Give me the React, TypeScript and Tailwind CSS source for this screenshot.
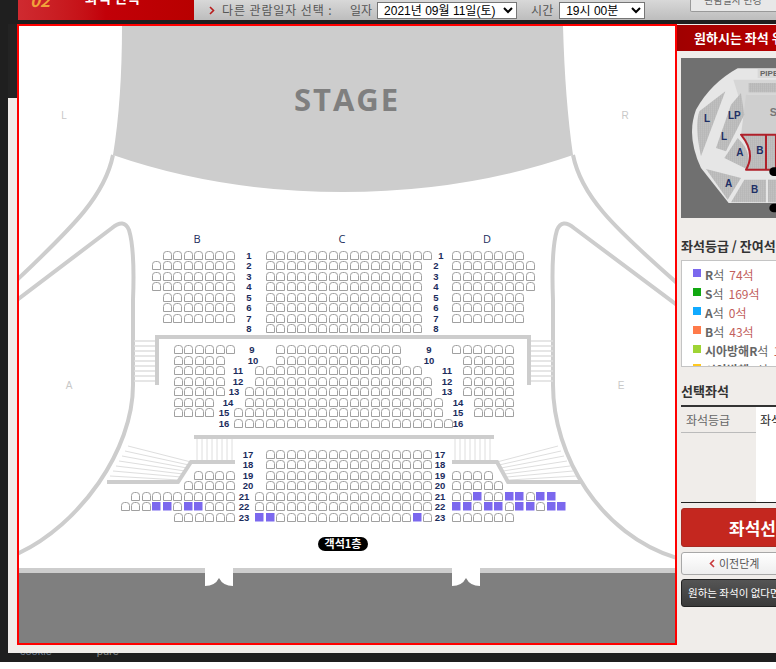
const kr = "font-['Noto_Sans_CJK_KR','Liberation_Sans',sans-serif]";

// [top, left, count, sold seats]
type Row = [number, number, number, number[]?];

const P = 10.5;
const rowY = (n: number, base: number, first: number) => base + (n - first) * P;
const upper = (n: number) => rowY(n, 250.5, 1);
const middle = (n: number) => rowY(n, 345, 9);
const lower = (n: number) => rowY(n, 449.5, 17);

const seats: Row[] = [
  // 1-8
  [upper(1), 162.5, 7], [upper(1), 265.5, 16], [upper(1), 452, 7],
  ...[2, 3, 4].flatMap((n): Row[] => [[upper(n), 152, 8], [upper(n), 265.5, 15], [upper(n), 452, 8]]),
  ...[5, 6, 7].flatMap((n): Row[] => [[upper(n), 162.5, 7], [upper(n), 265.5, 15], [upper(n), 452, 7]]),
  [upper(8), 265.5, 15],
  // 9-16
  [middle(9), 173.5, 6], [middle(9), 276, 12], [middle(9), 452, 6],
  [middle(10), 173.5, 5], [middle(10), 276, 12], [middle(10), 463, 5],
  [middle(11), 173.5, 5], [middle(11), 255, 16], [middle(11), 463, 5],
  [middle(12), 173.5, 5], [middle(12), 255, 17], [middle(12), 463, 5],
  [middle(13), 173.5, 5], [middle(13), 244.5, 18], [middle(13), 463, 5],
  [middle(14), 173.5, 4], [middle(14), 244.5, 19], [middle(14), 473.5, 4],
  [middle(15), 173.5, 4], [middle(15), 234, 20], [middle(15), 473.5, 4],
  [middle(16), 234, 21],
  // 17-23
  ...[17, 18].map((n): Row => [lower(n), 265.5, 16]),
  [lower(19), 194, 4], [lower(19), 265.5, 16], [lower(19), 452, 4],
  [lower(20), 183.5, 5], [lower(20), 265.5, 16], [lower(20), 452, 5],
  [lower(21), 131, 10], [lower(21), 255, 17], [lower(21), 452, 10, [2, 5, 6, 8, 9]],
  [lower(22), 120.5, 11, [3, 4, 6, 7]], [lower(22), 255, 17], [lower(22), 452, 11, [0, 1, 3, 4, 6, 7, 9, 10]],
  [lower(23), 173.5, 6], [lower(23), 255, 17, [0, 1, 15]], [lower(23), 452, 6],
];

// [label, x, y]
const labels: [string, number, number][] = [
  ...[1, 2, 3, 4, 5, 6, 7, 8].flatMap((n): [string, number, number][] => [
    [`${n}`, 249, upper(n) + 8],
    [`${n}`, n === 1 ? 441 : 436, upper(n) + 8],
  ]),
  ['9', 252, middle(9) + 8], ['9', 429, middle(9) + 8],
  ['10', 253, middle(10) + 8], ['10', 429, middle(10) + 8],
  ['11', 238, middle(11) + 8], ['11', 447, middle(11) + 8],
  ['12', 238, middle(12) + 8], ['12', 447, middle(12) + 8],
  ['13', 234, middle(13) + 8], ['13', 447, middle(13) + 8],
  ['14', 228, middle(14) + 8], ['14', 458, middle(14) + 8],
  ['15', 224, middle(15) + 8], ['15', 458, middle(15) + 8],
  ['16', 224, middle(16) + 8], ['16', 458, middle(16) + 8],
  ...[17, 18, 19, 20].flatMap((n): [string, number, number][] => [
    [`${n}`, 248, lower(n) + 8],
    [`${n}`, 440, lower(n) + 8],
  ]),
  ...[21, 22, 23].flatMap((n): [string, number, number][] => [
    [`${n}`, 244, lower(n) + 8],
    [`${n}`, 440, lower(n) + 8],
  ]),
];

function Seat({ x, y, sold }: { x: number; y: number; sold: boolean }) {
  const l = Math.round(x) + 0.5;
  const t = Math.round(y) + 0.5;
  if (sold) return <rect x={l - 0.5} y={t - 0.5} width="8.5" height="8.5" fill="#7b68ee" />;
  return (
    <path
      d={`M${l} ${t + 8}V${t + 3}Q${l} ${t} ${l + 3} ${t}H${l + 5}Q${l + 8} ${t} ${l + 8} ${t + 3}V${t + 8}Z`}
      fill="white"
      stroke="#a0a0a0"
    />
  );
}

function Door({ x }: { x: number }) {
  return <path d={`M${x} 567V586Q${x + 10} 586 ${x + 14} 578Q${x + 18} 586 ${x + 28} 586V567Z`} fill="white" />;
}

function SeatMap() {
  return (
    <svg width="656" height="617" viewBox="19 26 656 617" className="block bg-white">
      {/* stage */}
      <path d="M122 26Q122 100 113 155Q220 192 343 192Q466 192 573 155Q565 100 563 26Z" fill="#cdcdcd" />
      <text x="347" y="111" textAnchor="middle" className="fill-[#7f7f7f] font-['Open_Sans'] text-[31px] font-bold tracking-[2px]">STAGE</text>
      {['L', 'R', 'A', 'E'].map((t, i) => (
        <text key={t} x={[64, 625, 69, 621][i]} y={[119, 119, 389, 389][i]} textAnchor="middle" className="fill-[#c8c8c8] font-['Liberation_Sans'] text-[10px]">{t}</text>
      ))}

      {/* balcony outlines */}
      <g fill="none" stroke="#cdcdcd" strokeWidth="4">
        <path d="M113 155C105 195 75 225 17 280" />
        <path d="M573 155C581 195 611 225 677 283" />
        <path d="M17 300L112 228Q124 218 129 230Q135 250 133 300V385C133 450 80 525 17 554" />
        <path d="M677 305L574 228Q562 218 557 230Q551 250 553 300V385C553 455 600 535 677 558" />
      </g>

      {/* aisle rails */}
      <path d="M157 385V337H529V385" fill="none" stroke="#cdcdcd" strokeWidth="4" />
      <g stroke="#dedede" strokeWidth="1.5">
        {[341, 346, 351, 356, 361, 366, 371, 376, 381].map((y) => (
          <g key={y}>
            <path d={`M134 ${y}H155`} />
            <path d={`M531 ${y}H553`} />
          </g>
        ))}
      </g>
      <path d="M194 437H494" stroke="#cdcdcd" strokeWidth="4" />
      <g stroke="#dedede" strokeWidth="1">
        {[197, 202, 207, 212, 217, 222, 227, 232].map((x) => (
          <g key={x}>
            <path d={`M${x} 439V460`} />
            <path d={`M${x + 258} 439V460`} />
          </g>
        ))}
        {[0, 1, 2, 3, 4, 5, 6].map((i) => (
          <g key={i}>
            <path d={`M${128 - i * 3} ${446 + i * 5}L${191 - i * 2} ${462 + i * 3}`} />
            <path d={`M${558 + i * 3} ${446 + i * 5}L${497 + i * 2} ${462 + i * 3}`} />
          </g>
        ))}
      </g>
      <g fill="none" stroke="#cdcdcd" strokeWidth="4">
        <path d="M235 462H191L178 482H107" />
        <path d="M452 462H497L508 482H581" />
      </g>

      {seats.map(([y, x, count, sold], r) =>
        Array.from({ length: count }, (_, i) => (
          <Seat key={`${r}-${i}`} x={x + i * P} y={y} sold={!!sold?.includes(i)} />
        )),
      )}

      {labels.map(([t, x, y], i) => (
        <text key={i} x={x} y={y} textAnchor="middle" className="fill-[#1b2c5c] font-['Liberation_Sans'] text-[9.5px] font-bold">{t}</text>
      ))}
      {['B', 'C', 'D'].map((t, i) => (
        <text key={t} x={[197, 342, 487][i]} y="243" textAnchor="middle" className="fill-[#1b2c5c] font-['Open_Sans'] text-[11px]">{t}</text>
      ))}

      <rect x="318" y="537" width="50" height="14" rx="7" fill="black" />
      <text x="343" y="548" textAnchor="middle" className={`fill-white ${kr} text-[11px] font-bold`}>객석1층</text>

      {/* lobby */}
      <rect x="19" y="568" width="656" height="5" fill="#cdcdcd" />
      <rect x="19" y="573" width="656" height="70" fill="#7f7f7f" />
      <Door x={205} />
      <Door x={452} />
    </svg>
  );
}

function MiniMap() {
  const letter = "fill-[#1e2f66] font-['Liberation_Sans'] text-[30px] font-bold";
  return (
    <svg width="95" height="160" viewBox="15 115 285 480" className="block">
      <defs>
        <pattern id="hatch" width="6" height="6" patternUnits="userSpaceOnUse">
          <rect width="6" height="6" fill="#c2c2c2" />
          <path d="M0 0H6M0 0V6" stroke="#a6a6a6" strokeWidth="1.5" />
        </pattern>
      </defs>
      <rect x="15" y="115" width="285" height="480" fill="#707070" />
      <path d="M185 146H300V550H158L75 445Q30 350 60 270Q105 190 185 146Z" fill="#e6e6e6" />
      <path d="M172 180H300V225H215L205 285Z" fill="#d6d6d6" />
      <path d="M210 225H300V345H195Z" fill="#cfcfcf" />
      <path d="M245 148H300V175H245Z" fill="#d8d8d8" />
      <text x="252" y="170" className="fill-[#666] font-['Liberation_Sans'] text-[24px] font-bold">PIPE</text>
      <rect x="218" y="190" width="82" height="28" fill="url(#hatch)" />
      <text x="281" y="288" className="fill-[#777] font-['Liberation_Sans'] text-[32px] font-bold">S</text>
      <path d="M148 215L70 275Q55 320 75 410Z" fill="url(#hatch)" />
      <path d="M195 220L165 255L120 385L150 395L205 285Z" fill="url(#hatch)" />
      <path d="M185 355L145 415L212 448Q232 400 185 355Z" fill="url(#hatch)" />
      <path d="M90 448L195 475L155 540Z" fill="url(#hatch)" />
      <path d="M205 480H270V548H165Z" fill="url(#hatch)" />
      <rect x="276" y="480" width="24" height="68" fill="url(#hatch)" />
      <path d="M195 345H300V450H210Q240 400 195 345Z" fill="url(#hatch)" stroke="#b0202a" strokeWidth="6" strokeLinejoin="round" />
      <path d="M270 345V450" stroke="#b0202a" strokeWidth="6" />
      <text x="84" y="306" className={letter}>L</text>
      <text x="156" y="299" className={letter}>LP</text>
      <text x="135" y="362" className={letter}>L</text>
      <text x="181" y="408" className={letter}>A</text>
      <text x="241" y="404" className={letter}>B</text>
      <text x="147" y="502" className={letter}>A</text>
      <text x="225" y="520" className={letter}>B</text>
      <rect x="280" y="443" width="40" height="26" rx="13" fill="black" />
      <rect x="280" y="552" width="40" height="26" rx="13" fill="black" />
    </svg>
  );
}

const grades = [
  { color: 'bg-[#7b68ee]', head: 'R', count: '74석' },
  { color: 'bg-[#11a811]', head: 'S', count: '169석' },
  { color: 'bg-[#11aaff]', head: 'A', count: '0석' },
  { color: 'bg-[#ff7a4a]', head: 'B', count: '43석' },
  { color: 'bg-[#9fd435]', head: '시아방해R', count: '1석' },
  { color: 'bg-[#ffc820]', head: '시아방해S', count: '2석' },
];

function SidePanel() {
  return (
    <aside className="w-[99px] shrink-0 overflow-hidden bg-[#f0edea] pt-[1px]">
      <div className="flex h-[26px] w-[200px] items-center bg-gradient-to-r from-[#a00000] to-[#cc0000] pl-[17px] text-[13px] font-bold text-white">
        원하시는 좌석 위치를 선택
      </div>
      <div className="pl-[4px]">
        <div className="mt-[7px]">
          <MiniMap />
        </div>
        <h3 className="mt-[19px] h-[23px] w-[120px] text-[13px] leading-[18px] font-bold text-[#333]">좌석등급 / 잔여석</h3>
        <ul className="h-[107px] w-[120px] overflow-hidden border border-[#c4c4c4] bg-white pt-[4px] pl-[11px]">
          {grades.map((g) => (
            <li key={g.color} className="flex h-[19px] items-center whitespace-nowrap text-[12px]">
              <span className={`mb-[3px] h-[8px] w-[8px] shrink-0 ${g.color}`} />
              <span className="ml-[4px] text-[#666]">
                <b className="font-bold">{g.head}</b>석
              </span>
              <span className="ml-[5px] text-[#c2605c]">{g.count}</span>
            </li>
          ))}
        </ul>
        <h3 className="mt-[15px] h-[23px] text-[13px] leading-[18px] font-bold text-[#333]">선택좌석</h3>
        <div className="border-t-2 border-[#333]">
          <div className="flex h-[96px] w-[120px] border-b border-[#222]">
            <div className="h-[26px] w-[75px] border-b border-[#bbb] pl-[5px] text-[12px] leading-[25px] text-[#666]">좌석등급</div>
            <div className="flex-1 bg-white pl-[4px] text-[12px] leading-[25px] text-[#222]">좌석</div>
          </div>
        </div>
        <button type="button" className="mt-[5px] h-[39px] w-[120px] rounded-[3px] border border-[#a82a22] bg-[#c4271f] pl-[47px] text-left text-[17px] font-bold whitespace-nowrap text-white">
          좌석선택
        </button>
        <button type="button" className="mt-[5px] flex h-[23px] w-[120px] items-center rounded-[3px] border border-[#a8a8a8] bg-gradient-to-b from-white to-[#eeeeee] pl-[27px] text-[11px] text-[#555]">
          <svg width="6" height="9" viewBox="0 0 6 9" className="mr-[4px] shrink-0">
            <path d="M5 1L1.5 4.5L5 8" fill="none" stroke="#c8383a" strokeWidth="1.6" />
          </svg>
          이전단계
        </button>
        <button type="button" className="mt-[4px] h-[28px] w-[140px] rounded-[3px] border border-[#222] bg-gradient-to-b from-[#555] to-[#3a3a3a] pl-[6px] text-left text-[10.5px] whitespace-nowrap text-white">
          원하는 좌석이 없다면?
        </button>
      </div>
    </aside>
  );
}

export default function App() {
  return (
    <div className={`flex h-[669px] w-[776px] flex-col overflow-hidden bg-white ${kr}`}>
      <header className="flex h-[24px] shrink-0 bg-[#1f1f1f] pl-[18px]">
        <div className="relative h-[20px] w-[176px] shrink-0 overflow-hidden bg-gradient-to-r from-[#cf2a30] via-[#c20008] to-[#b80000]">
          <span className="absolute -top-[13px] left-[12px] text-[17px] font-bold text-[#f2a23a] italic">02</span>
          <span className="absolute -top-[13px] left-[67px] text-[14px] font-bold whitespace-nowrap text-white">좌석 선택</span>
        </div>
        <div className="flex h-[20px] min-w-0 flex-1 items-center bg-gradient-to-b from-[#d8d8d8] to-[#bdbdbd] pl-[15px] text-[12px] whitespace-nowrap text-[#555]">
          <svg width="13" height="9" viewBox="0 0 13 9" className="shrink-0">
            <path d="M1 1L4.5 4.5L1 8" fill="none" stroke="#b81c1c" strokeWidth="1.6" />
          </svg>
          <span className="w-[128px] shrink-0 tracking-[0.9px]">다른 관람일자 선택 :</span>
          <span className="shrink-0">일자</span>
          <select defaultValue="a" className="ml-[5px] h-[17px] w-[140px] shrink-0 border border-[#767676] bg-white p-0 pl-[2px] font-['Liberation_Sans','Noto_Sans_CJK_KR',sans-serif] text-[12px] leading-[15px] text-black">
            <option value="a">2021년 09월 11일(토)</option>
          </select>
          <span className="ml-[14px] shrink-0">시간</span>
          <select defaultValue="a" className="ml-[6px] h-[17px] w-[86px] shrink-0 border border-[#767676] bg-white p-0 pl-[2px] font-['Liberation_Sans','Noto_Sans_CJK_KR',sans-serif] text-[12px] leading-[15px] text-black">
            <option value="a">19시 00분</option>
          </select>
          <div className="relative ml-[45px] h-[12px] w-[90px] shrink-0 self-start overflow-hidden rounded-b-[2px] border border-t-0 border-[#999] bg-[#e8e8e8]">
            <span className="absolute -top-[8px] left-[13px] text-[10px] text-[#666]">관람일자 변경</span>
          </div>
        </div>
      </header>
      <div className="flex h-[629px] shrink-0 bg-[#1f1f1f]">
        <div className="ml-[8px] flex w-[9px] shrink-0 flex-col">
          <div className="h-[74px] bg-[#232323]" />
          <div className="flex-1 bg-[#f0edea]" />
        </div>
        <div className="w-[660px] shrink-0 bg-[#f0edea] pb-[8px]">
          <div className="border-2 border-[#ff0000]">
            <SeatMap />
          </div>
        </div>
        <SidePanel />
      </div>
      <div className="flex h-[9px] shrink-0 gap-[45px] overflow-hidden bg-[#1f1f1f] pl-[20px] font-['Liberation_Sans'] text-[11px] leading-[0px] text-[#6f7f95]">
        <span className="-mt-[2px]">cookie</span>
        <span className="-mt-[2px] text-[#8a8a8a]">pure</span>
      </div>
    </div>
  );
}
